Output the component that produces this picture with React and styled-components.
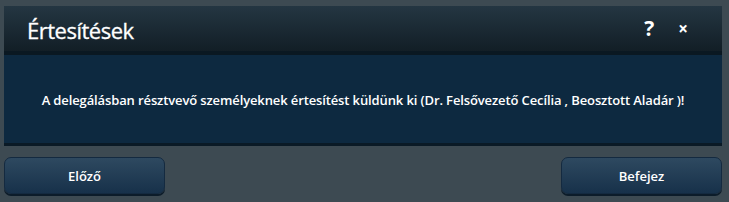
import React from 'react'
import styled, { createGlobalStyle } from 'styled-components'

const Global = createGlobalStyle`
  html, body { margin:0; padding:0; }
  body {
    background:#3d4a52;
    font-family:"Open Sans", "Noto Sans", sans-serif;
    width:729px;
    height:202px;
    overflow:hidden;
  }
`

const Page = styled.div`
  padding:6px 7px 0 4px;
  display:flex;
  flex-direction:column;
  gap:14px;
`

const Dialog = styled.div`
  display:flex;
  flex-direction:column;
  box-shadow:0 3px 0 #0a1a26;
`

const Header = styled.div`
  height:45px;
  display:flex;
  align-items:center;
  justify-content:space-between;
  padding:0 34px 0 23px;
  background:linear-gradient(#243642, #121e26);
  border-bottom:4px solid #0a1822;
`

const Title = styled.h1`
  margin:0;
  color:#ffffff;
  font-size:22px;
  font-weight:400;
  letter-spacing:-0.5px;
  padding-top:2px;
  -webkit-text-stroke:0.3px #ffffff;
`

const Tools = styled.div`
  display:flex;
  align-items:center;
  gap:24px;
`

const ToolButton = styled.button`
  background:transparent;
  border:none;
  padding:0;
  color:#ffffff;
  font-family:"Open Sans", sans-serif;
  font-weight:700;
  font-size:${p => p.$size || 16}px;
  cursor:pointer;
  line-height:1;
`

const Body = styled.div`
  height:86px;
  background:#0d2940;
  display:flex;
  align-items:center;
  justify-content:center;
  color:#ffffff;
  font-size:13px;
  font-weight:600;
  letter-spacing:-0.12px;
  padding-top:2px;
`

const Footer = styled.div`
  display:flex;
  justify-content:space-between;
`

const Button = styled.button`
  width:161px;
  height:37px;
  border-radius:7px;
  border:1px solid #142a40;
  background:linear-gradient(#2e4960, #17314a);
  box-shadow:0 2px 0 #0c1c2a;
  color:#ffffff;
  font-family:"Open Sans", sans-serif;
  font-size:13px;
  font-weight:600;
  cursor:pointer;
`

export default function App() {
  return (
    <>
      <Global />
      <Page>
        <Dialog>
          <Header>
            <Title>Értesítések</Title>
            <Tools>
              <ToolButton $size={21}>?</ToolButton>
              <ToolButton $size={17}>×</ToolButton>
            </Tools>
          </Header>
          <Body>
            A delegálásban résztvevő személyeknek értesítést küldünk ki (Dr. Felsővezető Cecília , Beosztott Aladár )!
          </Body>
        </Dialog>
        <Footer>
          <Button>Előző</Button>
          <Button>Befejez</Button>
        </Footer>
      </Page>
    </>
  )
}
